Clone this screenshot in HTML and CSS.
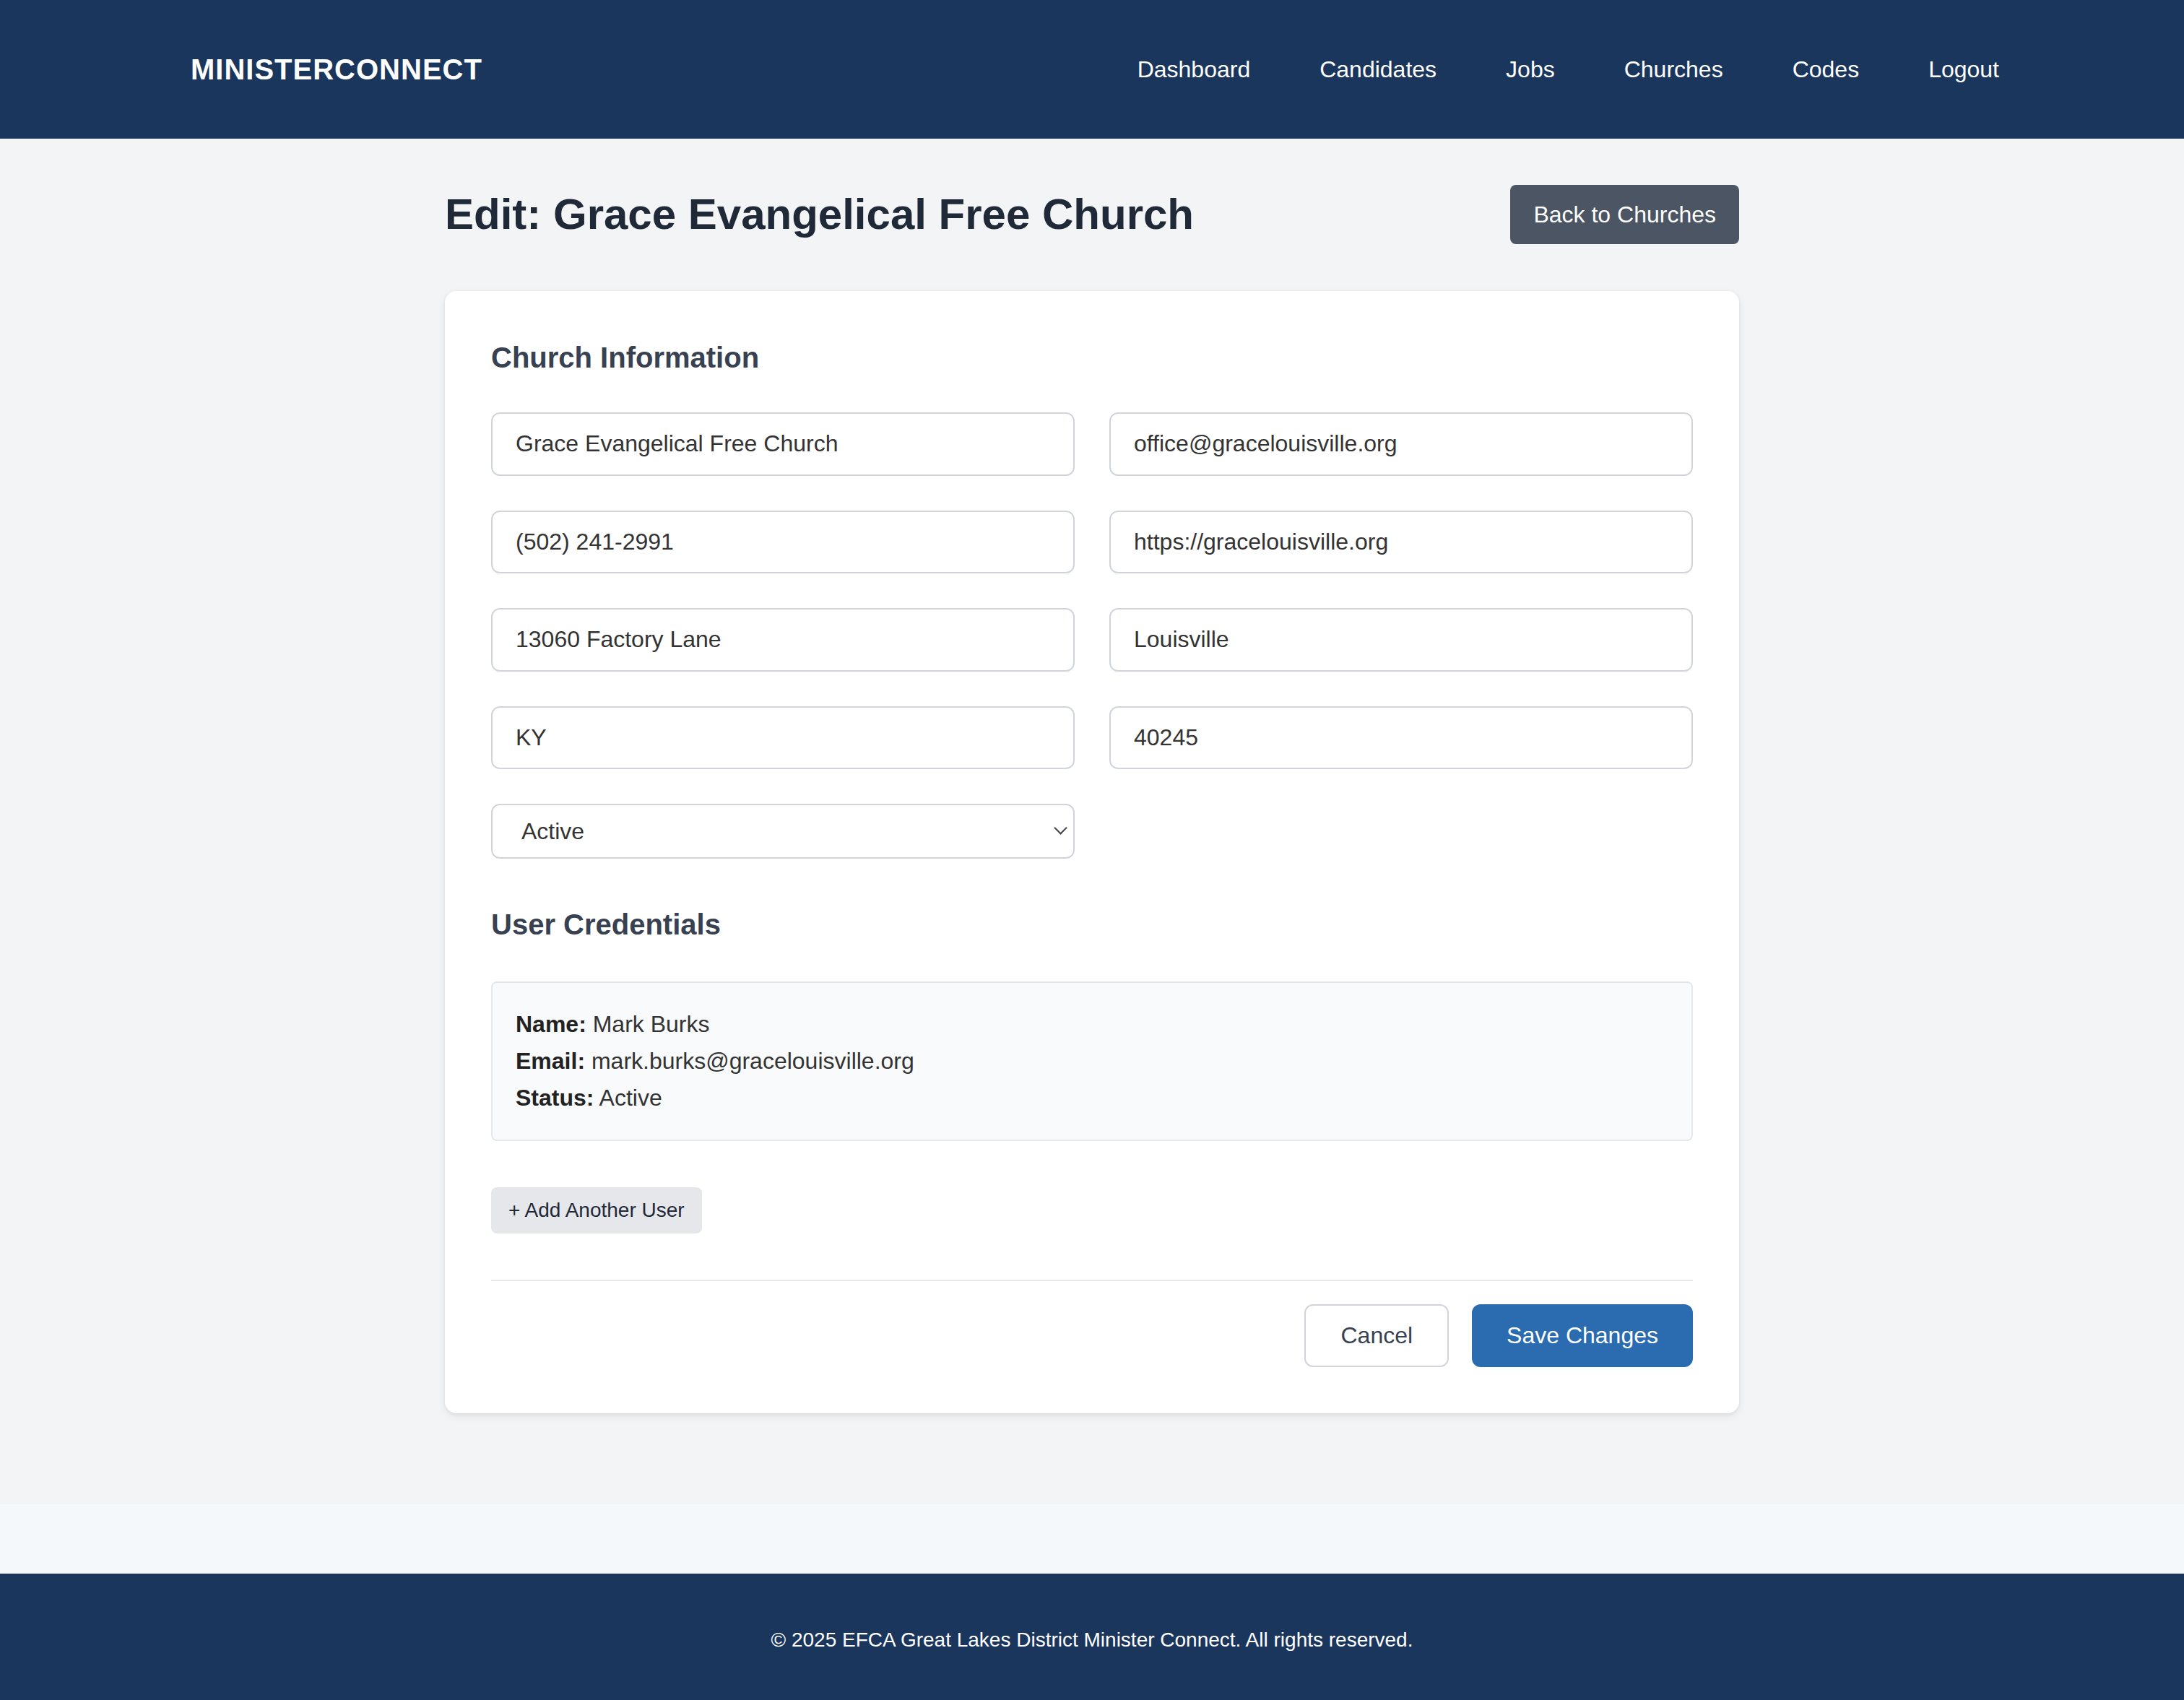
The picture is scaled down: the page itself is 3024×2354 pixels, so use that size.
FILE: index.html
```html
<!DOCTYPE html>
<html lang="en">
<head>
<meta charset="utf-8">
<title>Edit Church - MinisterConnect</title>
<link rel="stylesheet" href="styles.css">
</head>
<body>
<header class="site-header">
  <div class="header-inner">
    <a class="logo" href="#">MINISTERCONNECT</a>
    <nav class="main-nav">
      <a href="#">Dashboard</a>
      <a href="#">Candidates</a>
      <a href="#">Jobs</a>
      <a href="#">Churches</a>
      <a href="#">Codes</a>
      <a href="#">Logout</a>
    </nav>
  </div>
</header>
<main class="page">
  <div class="container">
    <div class="page-head">
      <h1 class="page-title">Edit: Grace Evangelical Free Church</h1>
      <a class="btn btn-dark" href="#">Back to Churches</a>
    </div>
    <form class="card">
      <h2 class="section-title">Church Information</h2>
      <div class="field-grid">
        <input class="field" type="text" value="Grace Evangelical Free Church">
        <input class="field" type="email" value="office@gracelouisville.org">
        <input class="field" type="text" value="(502) 241-2991">
        <input class="field" type="text" value="https://gracelouisville.org">
        <input class="field" type="text" value="13060 Factory Lane">
        <input class="field" type="text" value="Louisville">
        <input class="field" type="text" value="KY">
        <input class="field" type="text" value="40245">
        <div class="select-wrap">
          <select class="field field-select">
            <option selected>Active</option>
            <option>Inactive</option>
          </select>
        </div>
      </div>
      <h2 class="section-title section-title--spaced">User Credentials</h2>
      <div class="cred-box">
        <p><strong>Name:</strong> Mark Burks</p>
        <p><strong>Email:</strong> mark.burks@gracelouisville.org</p>
        <p><strong>Status:</strong> Active</p>
      </div>
      <div class="add-row">
        <button type="button" class="btn btn-light">+ Add Another User</button>
      </div>
      <div class="form-actions">
        <button type="button" class="btn btn-outline">Cancel</button>
        <button type="submit" class="btn btn-primary">Save Changes</button>
      </div>
    </form>
  </div>
</main>
<div class="spacer"></div>
<footer class="site-footer">
  <p>© 2025 EFCA Great Lakes District Minister Connect. All rights reserved.</p>
</footer>
</body>
</html>
```

FILE: styles.css
```css
* { box-sizing: border-box; }

html, body {
  margin: 0;
  padding: 0;
}

body {
  font-family: "Liberation Sans", Arial, Helvetica, sans-serif;
  background: #f4f8fb;
  color: #333333;
}

/* Header */
.site-header {
  background: #1b365d;
  height: 192px;
}

.header-inner {
  max-width: 2560px;
  height: 100%;
  margin: 0 auto;
  padding: 0 0 0 32px;
  display: flex;
  align-items: center;
  justify-content: space-between;
}

.logo {
  color: #ffffff;
  font-size: 40px;
  font-weight: 700;
  letter-spacing: 1px;
  line-height: 56px;
  text-decoration: none;
}

.main-nav {
  display: flex;
  gap: 48px;
}

.main-nav a {
  color: #ffffff;
  font-size: 32px;
  line-height: 48px;
  padding: 0 24px;
  text-decoration: none;
}

/* Main */
.page {
  background: #f3f4f6;
  padding: 64px 0 126px;
}

.container {
  max-width: 1792px;
  margin: 0 auto;
}

.page-head {
  display: flex;
  align-items: center;
  justify-content: space-between;
  margin-bottom: 65px;
}

.page-title {
  margin: 0;
  font-size: 60px;
  line-height: 72px;
  font-weight: 700;
  color: #1f2937;
}

.btn {
  font-family: inherit;
  font-size: 32px;
  text-decoration: none;
  cursor: pointer;
  display: inline-block;
}

.btn-dark {
  background: #4b5563;
  color: #ffffff;
  line-height: 48px;
  padding: 17px 32px;
  border-radius: 8px;
}

/* Card */
.card {
  background: #ffffff;
  border-radius: 16px;
  box-shadow: 0 4px 12px rgba(0, 0, 0, 0.08), 0 1px 4px rgba(0, 0, 0, 0.06);
  padding: 64px;
}

.section-title {
  margin: 0 0 48px;
  font-size: 40px;
  line-height: 56px;
  font-weight: 700;
  color: #374151;
}

.section-title--spaced {
  margin-top: 63px;
  margin-bottom: 51px;
}

.field-grid {
  display: grid;
  grid-template-columns: 1fr 1fr;
  gap: 48px;
}

.field {
  width: 100%;
  height: 87.5px;
  font-family: inherit;
  font-size: 32px;
  color: #333333;
  background: #ffffff;
  padding: 0 32px;
  border: 2px solid #d1d5db;
  border-radius: 12px;
  outline: none;
}

.select-wrap {
  position: relative;
}

.field-select {
  height: 76px;
  padding: 0 40px;
  -webkit-appearance: none;
  appearance: none;
}

.select-wrap::after {
  content: "";
  position: absolute;
  right: 13px;
  top: calc(50% - 11px);
  width: 11px;
  height: 11px;
  border-right: 2px solid #444444;
  border-bottom: 2px solid #444444;
  transform: rotate(45deg);
  pointer-events: none;
}

/* Credentials */
.cred-box {
  background: #f9fafb;
  border: 2px solid #e5e7eb;
  border-radius: 8px;
  padding: 32px;
}

.cred-box p {
  margin: 0;
  font-size: 32px;
  line-height: 51px;
  color: #333333;
}

.cred-box strong {
  color: #222222;
}

.add-row {
  margin-top: 64px;
}

.btn-light {
  background: #e5e7eb;
  color: #1f2937;
  border: none;
  border-radius: 8px;
  font-size: 28px;
  line-height: 40px;
  padding: 12px 24px;
}

.form-actions {
  margin-top: 64px;
  border-top: 2px solid #e5e7eb;
  padding-top: 32px;
  display: flex;
  justify-content: flex-end;
  gap: 32px;
}

.btn-outline {
  background: #ffffff;
  color: #374151;
  border: 2px solid #d1d5db;
  border-radius: 12px;
  line-height: 35px;
  padding: 24px 48px;
}

.btn-primary {
  background: #2b6cb0;
  color: #ffffff;
  border: 2px solid #2b6cb0;
  border-radius: 12px;
  line-height: 35px;
  padding: 24px 46px;
}

/* Footer */
.spacer {
  height: 96px;
}

.site-footer {
  background: #1b365d;
  color: #ffffff;
  text-align: center;
  padding: 72px 0 64px;
}

.site-footer p {
  margin: 0;
  font-size: 28px;
  line-height: 40px;
}
```
